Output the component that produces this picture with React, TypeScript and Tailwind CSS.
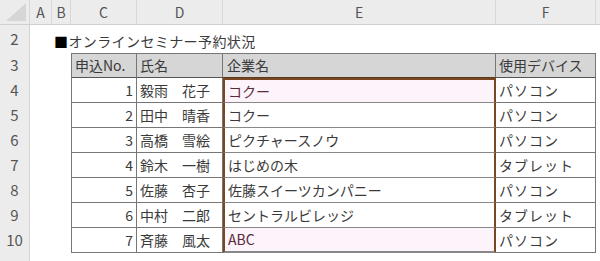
import React from 'react'

// Column widths of the sheet (row header, A..F)
const cols = {
  head: 'w-[30px]',
  a: 'w-[22px]',
  b: 'w-[19px]',
  c: 'w-[66px]',
  d: 'w-[86px]',
  e: 'w-[273px]',
  f: 'w-[100px]',
}

const rows = [
  { no: 1, name: '毅雨　花子', company: 'コクー', device: 'パソコン' },
  { no: 2, name: '田中　晴香', company: 'コクー', device: 'パソコン' },
  { no: 3, name: '高橋　雪絵', company: 'ピクチャースノウ', device: 'パソコン' },
  { no: 4, name: '鈴木　一樹', company: 'はじめの木', device: 'タブレット' },
  { no: 5, name: '佐藤　杏子', company: '佐藤スイーツカンパニー', device: 'パソコン' },
  { no: 6, name: '中村　二郎', company: 'セントラルビレッジ', device: 'タブレット' },
  { no: 7, name: '斉藤　風太', company: 'ABC', device: 'パソコン' },
]

const font = "font-['Noto_Sans_CJK_JP','Noto_Sans',sans-serif]"

function RowHead({ n }: { n: number | string }) {
  return (
    <div className={`${cols.head} shrink-0 h-full bg-[#ececec] border-r border-[#d4d4d4] flex items-center justify-center text-[15px] text-[#555]`}>
      {n}
    </div>
  )
}

function ColHead({ w, label, last }: { w: string; label?: string; last?: boolean }) {
  return (
    <div className={`${w} shrink-0 h-full flex items-center justify-center text-[14px] text-[#555] ${last ? '' : 'border-r border-[#d8d8d8]'}`}>
      {label}
    </div>
  )
}

export default function App() {
  return (
    <div className={`w-[600px] h-[261px] overflow-hidden bg-white text-[#3a3a3a] ${font}`}>
      {/* column letters */}
      <div className="flex h-[25px] bg-[#ececec] border-b border-[#d0d0d0]">
        <div className={`${cols.head} shrink-0 h-full border-r border-[#d8d8d8] flex items-end justify-end p-[3px]`}>
          <svg width="20" height="18" viewBox="0 0 20 18">
            <polygon points="20,0 20,18 0,18" fill="#d6d6d6" />
          </svg>
        </div>
        <ColHead w={cols.a} label="A" />
        <ColHead w={cols.b} label="B" />
        <ColHead w={cols.c} label="C" />
        <ColHead w={cols.d} label="D" />
        <ColHead w={cols.e} label="E" />
        <ColHead w={cols.f} label="F" />
        <div className="flex-1" />
      </div>

      {/* title row */}
      <div className="flex h-[28px]">
        <RowHead n={2} />
        <div className={`${cols.a} shrink-0`} />
        <div className="flex items-center pl-[2px] pt-[4px] text-[14px] tracking-[0.4px] whitespace-nowrap">
          <span className="text-black">■</span>オンラインセミナー予約状況
        </div>
      </div>

      {/* table header */}
      <div className="flex h-[25px]">
        <RowHead n={3} />
        <div className={`${cols.a} shrink-0`} />
        <div className={`${cols.b} shrink-0`} />
        <div className={`${cols.c} shrink-0 bg-[#d6d6d6] border-y border-l border-r border-t-[#777] border-b-[#555] border-l-[#777] border-r-[#777] flex items-center px-[3px] text-[14px]`}>
          申込No.
        </div>
        <div className={`${cols.d} shrink-0 bg-[#d6d6d6] border-y border-r border-t-[#777] border-b-[#555] border-r-[#777] flex items-center px-[3px] text-[14px]`}>
          氏名
        </div>
        <div className={`${cols.e} shrink-0 bg-[#d6d6d6] border-y border-r border-t-[#777] border-b-[#5a3a1e] border-r-[#777] flex items-center px-[4px] text-[14px]`}>
          企業名
        </div>
        <div className={`${cols.f} shrink-0 bg-[#d6d6d6] border-y border-r border-t-[#777] border-b-[#555] border-r-[#777] flex items-center px-[3px] text-[14px] whitespace-nowrap`}>
          使用デバイス
        </div>
      </div>

      {/* data rows */}
      {rows.map((r, i) => {
        const first = i === 0
        const last = i === rows.length - 1
        return (
          <div key={r.no} className="flex h-[25px]">
            <RowHead n={r.no + 3} />
            <div className={`${cols.a} shrink-0`} />
            <div className={`${cols.b} shrink-0`} />
            <div className={`${cols.c} shrink-0 border-l border-r border-b border-[#777] flex items-center justify-end px-[3px] text-[14px]`}>
              {r.no}
            </div>
            <div className={`${cols.d} shrink-0 border-r border-b border-[#777] flex items-center px-[3px] text-[14px] whitespace-nowrap`}>
              {r.name}
            </div>
            <div
              className={`${cols.e} shrink-0 border-b border-b-[#888] border-x-2 border-x-[#7a4820] flex items-center px-[3px] text-[14px] whitespace-nowrap ${
                first ? 'border-t-2 border-t-[#7a4820] bg-[#fdf3fa] text-[#5a2a3a]' : ''
              } ${last ? 'border-b-2 border-b-[#7a4820] bg-[#fdf3fa] text-[#5a2a3a]' : ''}`}
            >
              {r.company}
            </div>
            <div className={`${cols.f} shrink-0 border-r border-b border-[#777] flex items-center px-[3px] text-[14px] tracking-[1px] whitespace-nowrap`}>
              {r.device}
            </div>
          </div>
        )
      })}

      {/* partial row 11 */}
      <div className="flex h-[8px]">
        <div className={`${cols.head} shrink-0 h-full bg-[#ececec] border-r border-[#d4d4d4]`} />
      </div>
    </div>
  )
}
